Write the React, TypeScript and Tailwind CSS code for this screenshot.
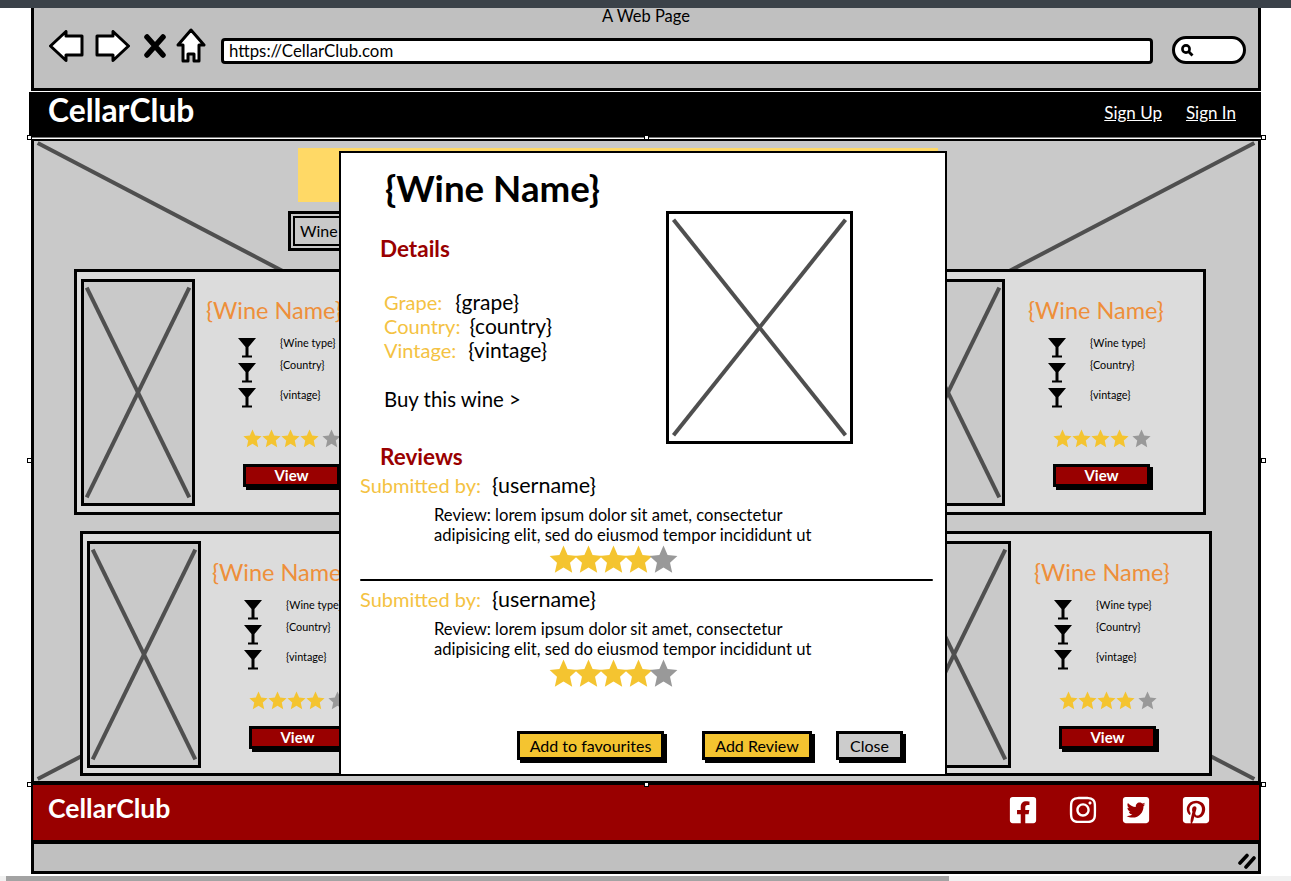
import { FaFacebookSquare, FaInstagram, FaPinterestSquare, FaTwitterSquare } from 'react-icons/fa';
import type { ReactElement } from 'react';

// ============================================================================
// Small drawings
// ============================================================================

function Star({ size, filled, className }: { size: number; filled: boolean; className?: string }): ReactElement {
  return (
    <svg width={size} height={size} viewBox="0 0 24 24" className={`shrink-0 ${className ?? ''}`}>
      <polygon
        points="12,0.5 15.4,8.2 23.5,9 17.4,14.6 19.2,23 12,18.7 4.8,23 6.6,14.6 0.5,9 8.6,8.2"
        fill={filled ? '#f4c430' : '#999999'}
      />
    </svg>
  );
}

function Stars({ size, step, lastClass }: { size: number; step?: string; lastClass?: string }): ReactElement {
  return (
    <div className={`flex ${step ?? ''}`}>
      {[0, 1, 2, 3, 4].map((i) => (
        <Star key={i} size={size} filled={i < 4} className={i === 4 ? lastClass : undefined} />
      ))}
    </div>
  );
}

function CrossLines({ inset = 2.5 }: { inset?: number }): ReactElement {
  const far = 100 - inset;
  return (
    <svg className="absolute inset-0 h-full w-full" viewBox="0 0 100 100" preserveAspectRatio="none">
      <line x1={inset} y1={inset} x2={far} y2={far} stroke="#4f4f4f" strokeWidth={4} vectorEffect="non-scaling-stroke" />
      <line x1={far} y1={inset} x2={inset} y2={far} stroke="#4f4f4f" strokeWidth={4} vectorEffect="non-scaling-stroke" />
    </svg>
  );
}

function Glass(): ReactElement {
  return (
    <svg width="18" height="20" viewBox="0 0 18 20" className="shrink-0">
      <path d="M0 0H18L10.5 9V17.5H14V19.5H4V17.5H7.5V9Z" fill="#000" />
    </svg>
  );
}

function BackIcon({ flip }: { flip?: boolean }): ReactElement {
  return (
    <svg width="35" height="32" viewBox="0 0 35 32" className={flip ? '-scale-x-100' : ''}>
      <path
        d="M1.5 16L17 1.5V6H33V25H17V30.5Z"
        fill="#fff"
        stroke="#000"
        strokeWidth="3"
        strokeLinejoin="round"
      />
    </svg>
  );
}

function CloseIcon(): ReactElement {
  return (
    <svg width="22" height="24" viewBox="0 0 22 24">
      <path d="M3 3L19 21M19 3L3 21" stroke="#000" strokeWidth="5.5" strokeLinecap="round" />
    </svg>
  );
}

function HomeIcon(): ReactElement {
  return (
    <svg width="30" height="35" viewBox="0 0 30 35">
      <path
        d="M15 2L28 17H23V33H18V26H12V33H7V17H2Z"
        fill="#fff"
        stroke="#000"
        strokeWidth="3"
        strokeLinejoin="round"
      />
    </svg>
  );
}

function SearchIcon(): ReactElement {
  return (
    <svg width="14" height="14" viewBox="0 0 14 14">
      <circle cx="6" cy="6" r="3.6" fill="none" stroke="#000" strokeWidth="2.6" />
      <path d="M9 9L12.5 12.5" stroke="#000" strokeWidth="2.8" />
    </svg>
  );
}

// ============================================================================
// Wine card
// ============================================================================

function WineCard({ nameClass, heightClass }: { nameClass: string; heightClass: string }): ReactElement {
  return (
    <div className={`relative flex w-[322px] border-[3px] border-black bg-[#dcdcdc] pl-[4px] pt-[7px] ${heightClass}`}>
      <div className="relative h-[227px] w-[114px] shrink-0 border-[3px] border-black bg-[#c9c9c9]">
        <CrossLines />
      </div>
      <div className="ml-[43px] flex flex-col">
        <div className={`mt-[16px] whitespace-nowrap text-[23.5px] leading-[30px] text-[#ee8f3a] ${nameClass}`}>{'{Wine Name}'}</div>
        <div className="mt-[13px] flex flex-col text-[10.8px] leading-[14px] text-black">
          <div className="flex h-[25px] items-start gap-[24px]">
            <Glass />
            <span className="-mt-[2px] whitespace-nowrap">{'{Wine type}'}</span>
          </div>
          <div className="flex h-[25px] items-start gap-[24px]">
            <Glass />
            <span className="-mt-[5px] whitespace-nowrap">{'{Country}'}</span>
          </div>
          <div className="flex items-start gap-[24px]">
            <Glass />
            <span className="whitespace-nowrap">{'{vintage}'}</span>
          </div>
        </div>
        <div className="ml-[5px] mt-[21px]">
          <Stars size={19} lastClass="ml-[3px]" />
        </div>
        <div className="ml-[5px] mt-[16px] flex h-[23px] w-[97px] items-center justify-center border-[3px] border-black bg-[#990000] text-[15px] font-bold text-white shadow-[3px_3px_0_#000]">
          View
        </div>
      </div>
    </div>
  );
}

// ============================================================================
// Modal
// ============================================================================

function DetailRow({ label, value, gapClass }: { label: string; value: string; gapClass: string }): ReactElement {
  return (
    <div className={`flex h-[24px] items-center whitespace-nowrap text-[20px] ${gapClass}`}>
      <span className="text-[#f4c242]">{label}</span>
      <span className="text-[21px] text-black">{value}</span>
    </div>
  );
}

function Review(): ReactElement {
  return (
    <div>
      <div className="flex h-[26px] items-center whitespace-nowrap text-[20px]">
        <span className="w-[132px] text-[#f4c242]">Submitted by:</span>
        <span className="text-[21.5px] text-black">{'{username}'}</span>
      </div>
      <div className="ml-[74px] mt-[8px] text-[16.6px] leading-[19.5px] text-black">
        <div className="whitespace-nowrap">Review: lorem ipsum dolor sit amet, consectetur</div>
        <div className="whitespace-nowrap">adipisicing elit, sed do eiusmod tempor incididunt ut</div>
      </div>
      <div className="ml-[189px]">
        <Stars size={29} step="-space-x-[4px]" />
      </div>
    </div>
  );
}

function ModalButton({ label, className }: { label: string; className: string }): ReactElement {
  return (
    <div className={`flex h-[29px] items-center justify-center border-[3px] border-black text-[16px] text-black shadow-[3px_3px_0_#000] ${className}`}>
      {label}
    </div>
  );
}

function WineModal(): ReactElement {
  return (
    <div className="absolute left-[339px] top-[151px] flex h-[625px] w-[608px] flex-col border-2 border-black bg-white pl-[19px]">
      <div className="ml-[25px] mt-[12px] text-[36.7px] font-bold leading-[46px] text-black">{'{Wine Name}'}</div>
      <div className="ml-[20px] mt-[24px] text-[22.5px] font-bold leading-[28px] text-[#990000]">Details</div>
      <div className="ml-[24px] mt-[27px]">
        <DetailRow label="Grape:" value="{grape}" gapClass="gap-[13px]" />
        <DetailRow label="Country:" value="{country}" gapClass="gap-[9px]" />
        <DetailRow label="Vintage:" value="{vintage}" gapClass="gap-[12px]" />
      </div>
      <div className="ml-[24px] mt-[24px] text-[20.4px] leading-[26px] text-black">Buy this wine &gt;</div>
      <div className="ml-[20px] mt-[31px] text-[22.5px] font-bold leading-[28px] text-[#990000]">Reviews</div>
      <div className="mt-[1px]">
        <Review />
      </div>
      <div className="mt-[5px] h-[2px] w-[573px] rounded-full bg-black" />
      <div className="mt-[5px]">
        <Review />
      </div>
      <div className="mb-[14px] mt-auto flex">
        <ModalButton label="Add to favourites" className="ml-[157px] w-[147px] bg-[#f4c430]" />
        <ModalButton label="Add Review" className="ml-[38px] w-[110px] bg-[#f4c430]" />
        <ModalButton label="Close" className="ml-[24px] w-[67px] bg-[#cccccc]" />
      </div>
      <div className="absolute left-[325px] top-[58px] h-[233px] w-[187px] border-[3px] border-black bg-white">
        <CrossLines />
      </div>
    </div>
  );
}

// ============================================================================
// Page
// ============================================================================

const HANDLE_CLASSES = [
  'left-[27px] top-[135px]',
  'left-[644px] top-[135px]',
  'left-[1261px] top-[135px]',
  'left-[27px] top-[458px]',
  'left-[1261px] top-[458px]',
  'left-[27px] top-[782px]',
  'left-[644px] top-[782px]',
  'left-[1261px] top-[782px]',
];

export default function App(): ReactElement {
  return (
    <div className="relative h-[881px] w-[1291px] overflow-hidden bg-white [font-family:Lato,'Noto_Sans',sans-serif]">
      <div className="h-[8px] bg-[#3b4249]" />

      <div className="ml-[31px] w-[1230px]">
        {/* browser chrome */}
        <div className="h-[83px] border-x-[3px] border-b-[3px] border-black bg-[#c0c0c0]">
          <div className="h-[17px] text-center text-[16.5px] leading-[17px] text-black">A Web Page</div>
          <div className="mt-[2px] flex items-center pl-[15px]">
            <BackIcon />
            <div className="ml-[11px]">
              <BackIcon flip />
            </div>
            <div className="ml-[14px]">
              <CloseIcon />
            </div>
            <div className="ml-[10px]">
              <HomeIcon />
            </div>
            <div className="ml-[15px] mt-[11px] flex h-[26px] w-[932px] items-center rounded-[4px] border-[3px] border-black bg-white pl-[5px] text-[16.8px] text-black">
              https://CellarClub.com
            </div>
            <div className="ml-[19px] mt-[9px] flex h-[28px] w-[74px] items-center rounded-[14px] border-[3px] border-black bg-white pl-[5px]">
              <SearchIcon />
            </div>
          </div>
        </div>

        {/* nav */}
        <div className="-ml-[2px] mt-[1px] flex h-[46px] w-[1232px] items-center justify-between border-b border-[#777777] bg-black pl-[19px] pr-[25px] text-white">
          <div className="-mt-[8px] text-[31.8px] font-bold">CellarClub</div>
          <div className="-mt-[4px] flex gap-[24px] text-[17px] underline">
            <span>Sign Up</span>
            <span>Sign In</span>
          </div>
        </div>

        {/* hero */}
        <div className="relative mt-[1px] h-[642px] border-x-[3px] border-t-[2px] border-black bg-[#c9c9c9]">
          <CrossLines inset={0.3} />
          <div className="relative flex h-full flex-col">
            <div className="ml-[264px] mt-[7px] h-[54px] w-[640px] bg-[#ffd966]" />
            <div className="ml-[254px] mt-[9px] flex h-[40px] w-[120px] items-center border-[3px] border-black bg-[#c9c9c9] p-[2px]">
              <div className="flex h-full w-full items-center border-2 border-black pl-[5px] text-[16px] text-black">Wine</div>
            </div>
            <div className="ml-[40px] mt-[18px] flex w-[1132px] justify-between">
              <WineCard nameClass="-ml-[32px]" heightClass="h-[246px]" />
              <WineCard nameClass="-ml-[20px]" heightClass="h-[246px]" />
            </div>
            <div className="ml-[46px] mt-[16px] flex w-[1132px] justify-between">
              <WineCard nameClass="-ml-[32px]" heightClass="h-[245px]" />
              <WineCard nameClass="-ml-[20px]" heightClass="h-[245px]" />
            </div>
          </div>
        </div>

        {/* footer */}
        <div className="flex h-[63px] items-center justify-between border-x-[2px] border-y-[4px] border-black bg-[#990000] pl-[15px] text-white">
          <div className="-mt-[7px] text-[26.6px] font-bold">CellarClub</div>
          <div className="-mt-[6px] mr-[48px] flex items-center text-[30px]">
            <FaFacebookSquare />
            <FaInstagram className="ml-[30px]" />
            <FaTwitterSquare className="ml-[23px]" />
            <FaPinterestSquare className="ml-[30px]" />
          </div>
        </div>

        {/* window bottom */}
        <div className="relative h-[30px] border-x-[3px] border-b-[3px] border-black bg-[#c0c0c0]">
          <svg width="20" height="16" viewBox="0 0 20 16" className="absolute bottom-[2px] right-[1px]">
            <path d="M3 10L10 2.5M9 14L17 5" stroke="#000" strokeWidth="3.6" strokeLinecap="round" />
          </svg>
        </div>
      </div>

      {/* page scrollbar */}
      <div className="absolute bottom-0 left-0 h-[5px] w-full bg-[#f1f1f1]">
        <div className="ml-[6px] h-full w-[943px] bg-[#a3a3a3]" />
      </div>

      <WineModal />

      {HANDLE_CLASSES.map((pos) => (
        <div key={pos} className={`absolute h-[5px] w-[5px] border border-black bg-white ${pos}`} />
      ))}
    </div>
  );
}
